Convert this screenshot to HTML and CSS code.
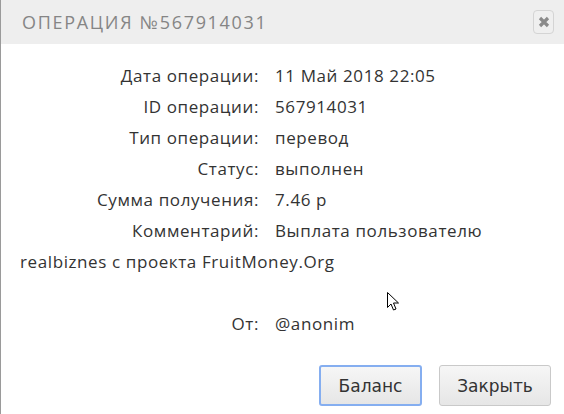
FILE: index.html
```html
<!DOCTYPE html>
<html lang="ru">
<head>
<meta charset="utf-8">
<link rel="stylesheet" href="styles.css">
</head>
<body>
<div class="dialog">
  <div class="titlebar">
    <span class="title">Операция №567914031</span>
    <button class="close" aria-label="close">
      <svg width="12" height="12" viewBox="0 0 12 12"><path d="M2 2L10 10M10 2L2 10" stroke="#8a8a8a" stroke-width="3.2" stroke-linecap="butt"/></svg>
    </button>
  </div>
  <div class="content">
    <div class="row"><span class="label">Дата операции:</span><span class="value">11 Май 2018 22:05</span></div>
    <div class="row"><span class="label">ID операции:</span><span class="value">567914031</span></div>
    <div class="row"><span class="label">Тип операции:</span><span class="value">перевод</span></div>
    <div class="row"><span class="label">Статус:</span><span class="value">выполнен</span></div>
    <div class="row"><span class="label">Сумма получения:</span><span class="value">7.46 р</span></div>
    <p class="comment"><span class="label">Комментарий:</span><span class="text">Выплата пользователю</span> <span class="text">realbiznes с проекта FruitMoney.Org</span></p>
    <div class="row from"><span class="label">От:</span><span class="value">@anonim</span></div>
  </div>
  <div class="buttons">
    <button class="btn focus">Баланс</button>
    <button class="btn">Закрыть</button>
  </div>
  <svg class="cursor" width="13" height="20" viewBox="0 0 13 20"><path d="M0.5 0.5V15.5L4 12L6.5 18L9 17L6.5 11H11.5Z" fill="#fff" stroke="#000" stroke-width="1"/></svg>
</div>
</body>
</html>
```
FILE: styles.css
```css
html, body { margin: 0; padding: 0; background: #fff; }
.dialog {
  position: relative;
  width: 564px; height: 414px;
  border-left: 1px solid #9a9a9a;
  box-sizing: border-box;
  background: #fff;
  font-family: "Open Sans", "Noto Sans", sans-serif;
}
.titlebar {
  height: 44px;
  background: #eeeeee;
  display: flex; align-items: center; justify-content: space-between;
  padding: 0 10px 0 21px;
}
.title {
  font-size: 18px; text-transform: uppercase; letter-spacing: 1.7px;
  color: #858585; font-weight: 400;
}
.close {
  width: 21px; height: 24px; padding: 0;
  border: 1px solid #d4d4d4; border-radius: 4px;
  background: #efefef;
  display: flex; align-items: center; justify-content: center;
}
.content {
  padding: 16px 0 0 19px;
  font-size: 17px; letter-spacing: 0.6px; color: #333;
  line-height: 31px;
}
.row { display: flex; }
.label { display: inline-block; width: 239px; text-align: right; margin-right: 16px; }
.comment { margin: 0 0 31px; padding-right: 20px; }
.buttons {
  display: flex; justify-content: flex-end; gap: 17px;
  padding: 26px 13px 0 0;
}
.btn {
  font-family: "DejaVu Sans", Verdana, sans-serif;
  font-size: 17px; color: #333;
  height: 41px; width: 112px;
  border: 1px solid #c9c9c9; border-radius: 3px;
  background: linear-gradient(#f6f6f6, #e6e6e6);
}
.btn.focus { width: 103px; border: 2px solid #85aef0; }
.cursor { position: absolute; left: 386px; top: 292px; }
```
